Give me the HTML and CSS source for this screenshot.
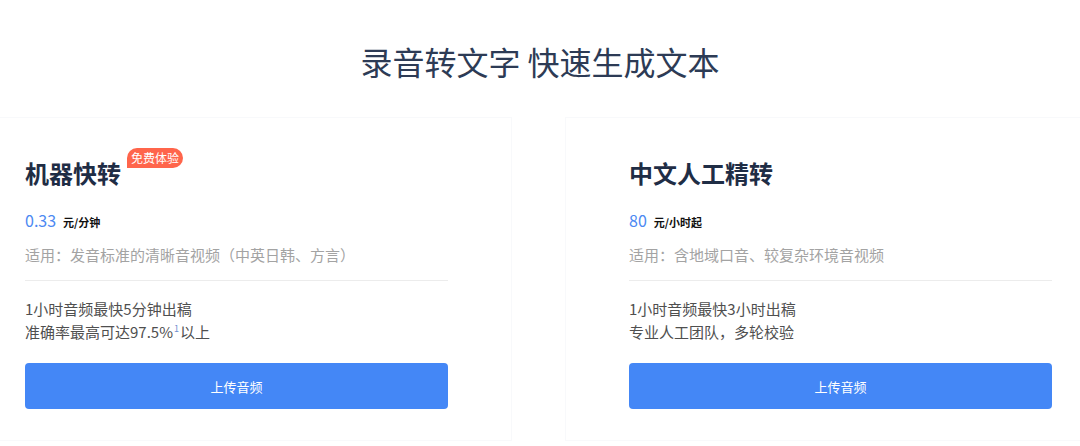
FILE: index.html
```html
<!DOCTYPE html>
<html lang="zh-CN">
<head>
<meta charset="utf-8">
<link rel="stylesheet" href="styles.css">
</head>
<body>
<div class="page">
  <h1 class="heading">录音转文字 快速生成文本</h1>
  <div class="cards">
    <div class="card">
      <div class="card-title"><span class="title-text">机器快转<span class="badge">免费体验</span></span></div>
      <div class="price"><span class="num">0.33</span><span class="unit">元/分钟</span></div>
      <div class="fit">适用：发音标准的清晰音视频（中英日韩、方言）</div>
      <div class="sep"></div>
      <div class="features">
        <p>1小时音频最快5分钟出稿</p>
        <p>准确率最高可达97.5%<sup>1</sup>以上</p>
      </div>
      <button class="btn">上传音频</button>
    </div>
    <div class="card">
      <div class="card-title"><span class="title-text">中文人工精转</span></div>
      <div class="price"><span class="num">80</span><span class="unit">元/小时起</span></div>
      <div class="fit">适用：含地域口音、较复杂环境音视频</div>
      <div class="sep"></div>
      <div class="features">
        <p>1小时音频最快3小时出稿</p>
        <p>专业人工团队，多轮校验</p>
      </div>
      <button class="btn">上传音频</button>
    </div>
  </div>
</div>
</body>
</html>
```
FILE: styles.css
```css
html, body {
  margin: 0;
  padding: 0;
  background: #fff;
  overflow: hidden;
}
body {
  font-family: "Microsoft YaHei", "Noto Sans CJK SC", "Noto Sans", sans-serif;
  width: 1080px;
  height: 446px;
}
.page {
  padding-top: 42px;
}
.heading {
  margin: 0;
  text-align: center;
  font-size: 32px;
  line-height: 38px;
  font-weight: 400;
  color: #2d3b55;
}
.cards {
  display: flex;
  gap: 53px;
  margin-top: 37px;
  margin-left: -39px;
}
.card {
  flex: 0 0 551px;
  box-sizing: border-box;
  padding: 39px 63px 31px;
  border: 1px solid #f8f9fb;
}
.card-title {
  height: 32px;
  line-height: 32px;
  font-size: 24px;
  font-weight: 700;
  color: #1f2d45;
}
.title-text {
  position: relative;
  display: inline-block;
}
.badge {
  position: absolute;
  left: calc(100% + 6px);
  top: -9px;
  height: 20px;
  line-height: 20px;
  padding: 0 4px;
  font-size: 12px;
  font-weight: 400;
  color: #fff;
  background: #ff654b;
  border-radius: 10px 10px 10px 0;
  white-space: nowrap;
}
.price {
  margin-top: 20px;
  height: 22px;
  line-height: 22px;
  display: flex;
  align-items: baseline;
}
.price .num {
  font-size: 16px;
  color: #4c89f2;
}
.price .unit {
  margin-left: 7px;
  font-size: 11px;
  font-weight: 700;
  color: #111;
}
.fit {
  margin-top: 12px;
  line-height: 24px;
  font-size: 15px;
  color: #a3a3a3;
}
.sep {
  margin-top: 13px;
  height: 1px;
  background: #ececec;
}
.features {
  margin-top: 16px;
}
.features p {
  margin: 0;
  font-size: 15px;
  line-height: 23px;
  color: #4f4f4f;
}
.features sup {
  font-size: 9px;
  color: #6f8fd0;
  vertical-align: 6px;
  line-height: 0;
  margin: 0 1px;
}
.btn {
  display: block;
  margin-top: 20px;
  width: 100%;
  height: 46px;
  border: none;
  border-radius: 4px;
  background: #4487f6;
  color: #fff;
  font-family: inherit;
  font-size: 13px;
  cursor: pointer;
}
```
